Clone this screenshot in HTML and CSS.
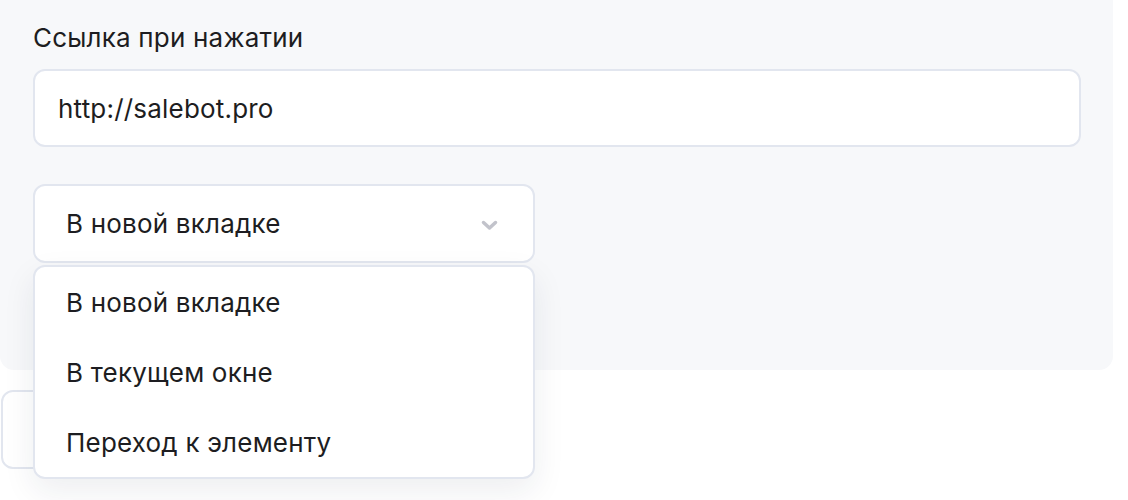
FILE: index.html
```html
<!DOCTYPE html>
<html lang="ru">
<head>
<meta charset="utf-8">
<link rel="stylesheet" href="styles.css">
</head>
<body>
<div class="panel">
  <div class="label">Ссылка при нажатии</div>
  <div class="input">http://salebot.pro</div>
  <div class="select-wrap">
    <div class="select">
      <span>В новой вкладке</span>
      <svg class="chev" width="17" height="11" viewBox="0 0 17 11"><path d="M2.5 2.5 L8.5 8 L14.5 2.5" fill="none" stroke="#c2c3cb" stroke-width="3.5" stroke-linecap="round" stroke-linejoin="round"/></svg>
    </div>
    <div class="menu">
      <div class="item">В новой вкладке</div>
      <div class="item">В текущем окне</div>
      <div class="item">Переход к элементу</div>
    </div>
  </div>
</div>
<div class="below"></div>
</body>
</html>
```
FILE: styles.css
```css
html, body {
  margin: 0;
  background: #ffffff;
}
body {
  font-family: "Inter", "Noto Sans", sans-serif;
  color: #1d1d21;
  font-size: 26px;
  letter-spacing: 0.2px;
  min-height: 500px;
}
.panel {
  width: 1113px;
  height: 370px;
  box-sizing: border-box;
  background: #f7f8fa;
  border-radius: 0 0 14px 14px;
  padding: 22px 32px 0 33px;
}
.label {
  line-height: 32px;
  height: 32px;
}
.input {
  margin-top: 15px;
  height: 78px;
  box-sizing: border-box;
  border: 2px solid #e2e6ef;
  border-radius: 12px;
  background: #fff;
  padding: 0 23px;
  display: flex;
  align-items: center;
}
.select-wrap {
  position: relative;
  width: 502px;
  margin-top: 37px;
  z-index: 2;
}
.select {
  height: 79px;
  box-sizing: border-box;
  border: 2px solid #e2e6ef;
  border-radius: 12px;
  background: #fff;
  padding: 0 35px 0 31px;
  display: flex;
  align-items: center;
  justify-content: space-between;
}
.chev {
  margin-top: 4px;
}
.menu {
  position: absolute;
  left: 0;
  right: 0;
  top: calc(100% + 2px);
  background: #fff;
  border: 2px solid #e2e6ef;
  border-radius: 12px;
  box-shadow: 0 12px 32px rgba(30, 40, 70, 0.08);
}
.item {
  height: 70px;
  padding: 0 31px;
  display: flex;
  align-items: center;
}
.below {
  margin-top: 20px;
  margin-left: 1px;
  width: 300px;
  height: 79px;
  box-sizing: border-box;
  border: 2px solid #e2e6ef;
  border-radius: 12px;
  background: #fff;
}
```
